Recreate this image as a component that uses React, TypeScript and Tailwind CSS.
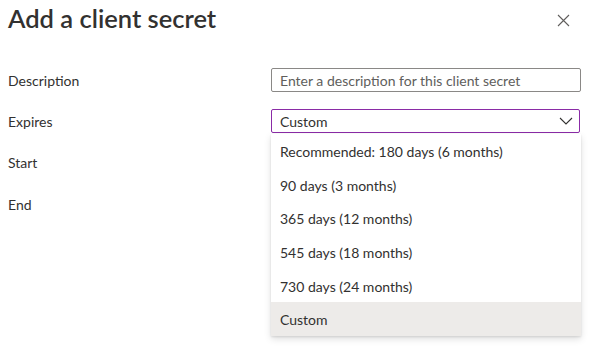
import React from "react";

const options = [
  "Recommended: 180 days (6 months)",
  "90 days (3 months)",
  "365 days (12 months)",
  "545 days (18 months)",
  "730 days (24 months)",
  "Custom",
];

const FormRow: React.FC<{ label: string; children?: React.ReactNode }> = ({
  label,
  children,
}) => {
  return (
    <div className="flex h-6 items-center">
      <div className="w-[263px] text-[14px] text-[#323130]">{label}</div>
      <div className="relative w-[310px]">{children}</div>
    </div>
  );
};

export default function App() {
  return (
    <div
      className="relative h-[359px] w-[597px] overflow-hidden bg-white text-[#323130]"
      style={{ fontFamily: '"Segoe UI", Lato, sans-serif' }}
    >
      <div className="flex items-start justify-between pl-2 pr-[27px] pt-[2px]">
        <h1 className="text-[25.5px] font-semibold leading-[32px] text-[#323130]">
          Add a client secret
        </h1>
        <button className="mt-[12px] text-[#605e5c]" aria-label="Close">
          <svg width="13" height="13" viewBox="0 0 13 13" fill="none">
            <path d="M1 1L12 12M12 1L1 12" stroke="#605e5c" strokeWidth="1.1" />
          </svg>
        </button>
      </div>

      <div className="mt-[34px] flex flex-col gap-[17px] pl-2">
        <FormRow label="Description">
          <input
            className="h-6 w-full rounded-[2px] border border-[#8a8886] px-2 text-[14px] text-[#323130] outline-none placeholder:text-[#605e5c]"
            placeholder="Enter a description for this client secret"
          />
        </FormRow>
        <FormRow label="Expires">
          <div className="flex h-6 w-[309px] items-center justify-between rounded-[2px] border border-[#8a2ba6] pl-2 pr-[6px] text-[14px]">
            <span>Custom</span>
            <svg width="14" height="8" viewBox="0 0 14 8" fill="none">
              <path d="M1 1L7 7L13 1" stroke="#323130" strokeWidth="1.1" />
            </svg>
          </div>
          <ul className="absolute left-0 top-[25px] z-10 w-[310px] bg-white shadow-[0_3px_7px_rgba(0,0,0,0.13),0_1px_2px_rgba(0,0,0,0.1)]">
            {options.map((opt) => (
              <li
                key={opt}
                className={`flex h-[33.6px] items-center px-[9px] pt-[2px] text-[14px] text-[#323130] ${
                  opt === "Custom" ? "bg-[#edebe9]" : ""
                }`}
              >
                {opt}
              </li>
            ))}
          </ul>
        </FormRow>
        <FormRow label="Start" />
        <div className="mt-px">
          <FormRow label="End" />
        </div>
      </div>
    </div>
  );
}
